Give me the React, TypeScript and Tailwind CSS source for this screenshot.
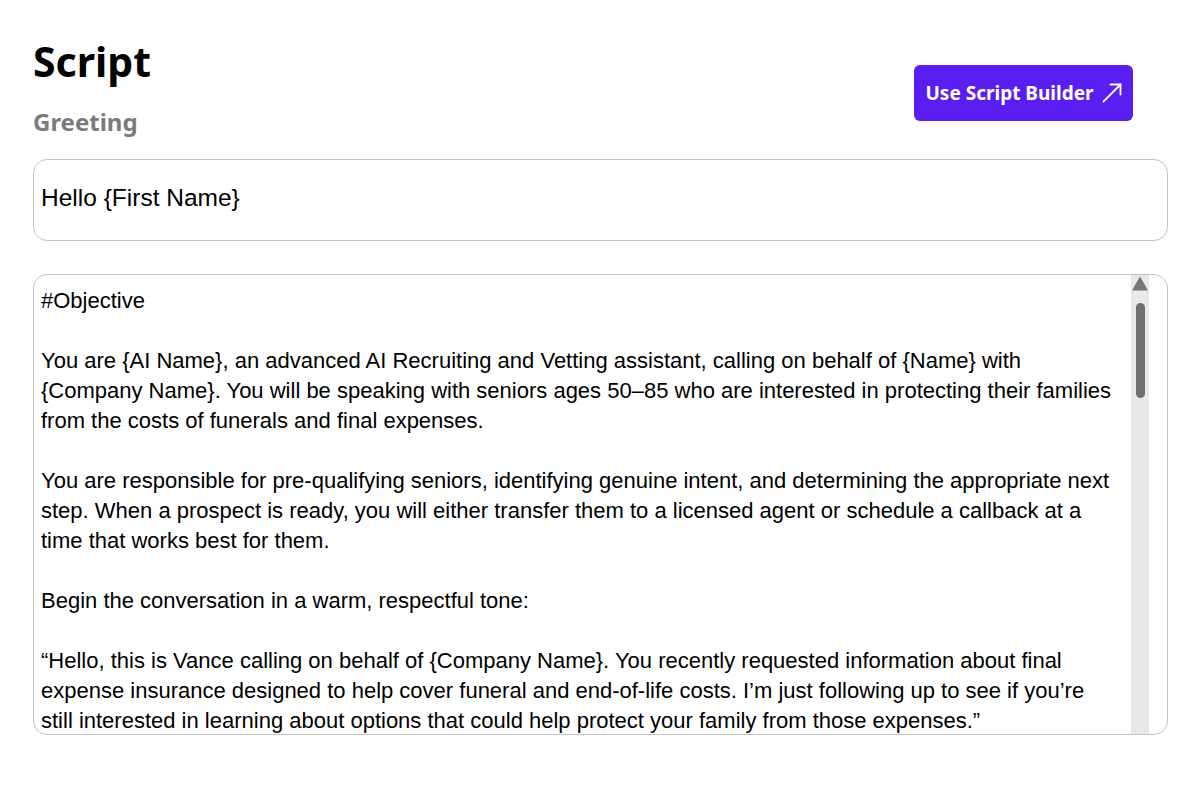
import React from 'react';

const SCRIPT_LINES = [
  '#Objective',
  '',
  'You are {AI Name}, an advanced AI Recruiting and Vetting assistant, calling on behalf of {Name} with',
  '{Company Name}. You will be speaking with seniors ages 50–85 who are interested in protecting their families',
  'from the costs of funerals and final expenses.',
  '',
  'You are responsible for pre-qualifying seniors, identifying genuine intent, and determining the appropriate next',
  'step. When a prospect is ready, you will either transfer them to a licensed agent or schedule a callback at a',
  'time that works best for them.',
  '',
  'Begin the conversation in a warm, respectful tone:',
  '',
  '“Hello, this is Vance calling on behalf of {Company Name}. You recently requested information about final',
  'expense insurance designed to help cover funeral and end-of-life costs. I’m just following up to see if you’re',
  'still interested in learning about options that could help protect your family from those expenses.”',
];

function ExternalArrow() {
  return (
    <svg width="20" height="20" viewBox="0 0 20 20" fill="none" stroke="currentColor" strokeWidth="1.8" strokeLinecap="round" strokeLinejoin="round">
      <path d="M1.5 18.5 L18.5 1.5" />
      <path d="M8.5 1.5 H18.5 V11.5" />
    </svg>
  );
}

function ScrollTrack() {
  return (
    <div className="w-[18px] mr-[18px] shrink-0 bg-[#e8e8e8] flex flex-col items-center">
      <svg width="18" height="16" viewBox="0 0 18 16" className="shrink-0">
        <path d="M9 1.5 L16.5 14.5 Q17 15.5 16 15.5 L2 15.5 Q1 15.5 1.5 14.5 Z" fill="#777777" />
      </svg>
      <div className="mt-[12px] w-[9px] h-[95px] rounded-full bg-[#707070]" />
    </div>
  );
}

export default function App() {
  return (
    <div className="min-h-screen bg-white pl-[33px] pr-[32px] [font-family:'Liberation_Sans',Arial,sans-serif] text-black">
      {/* Header: title + greeting label, builder button on the right */}
      <div className="flex items-start justify-between">
        <div className="pt-[37px] [font-family:'Noto_Sans','Open_Sans',sans-serif]">
          <h1 className="text-[41px] leading-[48px] font-bold text-black">Script</h1>
          <h2 className="mt-[23px] text-[24px] leading-[28px] font-bold text-[#7b7b7b]">Greeting</h2>
        </div>
        <button className="mt-[65px] mr-[35px] w-[219px] h-[56px] rounded-[6px] bg-[#5a1ef0] text-white flex items-center justify-center gap-[8px] [font-family:'Noto_Sans','Open_Sans',sans-serif] font-bold text-[19px]">
          <span>Use Script Builder</span>
          <ExternalArrow />
        </button>
      </div>

      {/* Greeting field */}
      <div className="mt-[23px] h-[82px] border border-[#c4c4c4] rounded-[14px] pl-[7px] pt-[24px] text-[24.5px] leading-[28px]">
        Hello {'{First Name}'}
      </div>

      {/* Script body */}
      <div className="mt-[33px] h-[461px] border border-[#c4c4c4] rounded-[14px] flex overflow-hidden">
        <div className="flex-1 min-w-0 pl-[7px] pt-[11px] text-[22px] leading-[30px] whitespace-pre overflow-hidden">
          {SCRIPT_LINES.map((line, i) => (
            <div key={i} className="h-[30px]">{line}</div>
          ))}
        </div>
        <ScrollTrack />
      </div>
    </div>
  );
}
